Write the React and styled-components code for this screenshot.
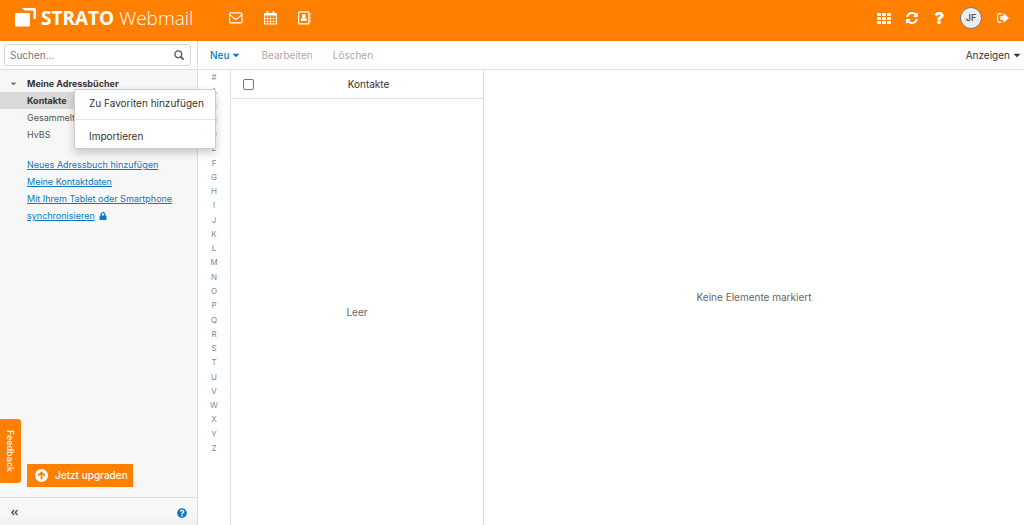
import React from "react";
import styled, { createGlobalStyle } from "styled-components";
import {
  FaCaretDown,
  FaQuestion,
  FaLock,
  FaQuestionCircle,
  FaAngleDoubleLeft,
} from "react-icons/fa";

const orange = "#ff8000";
const blue = "#0a7ac2";
const line = "#dedede";

const GlobalStyle = createGlobalStyle`
  *, *::before, *::after { box-sizing: border-box; }
  body {
    margin: 0;
    background: #fff;
    color: #333;
    font: 400 10px/17px Inter, "Liberation Sans", sans-serif;
  }
  button, input { font: inherit; color: inherit; }
  ul { list-style: none; margin: 0; padding: 0; }
  svg { display: block; flex: none; }
`;

const Page = styled.div`
  display: flex;
  flex-direction: column;
  min-height: 100vh;
`;

const Header = styled.header`
  display: flex;
  align-items: center;
  height: 41px;
  padding: 0 15px 5px 15px;
  background: ${orange};
  color: #fff;
`;

const Brand = styled.a`
  display: flex;
  align-items: center;
  gap: 5px;
  width: 214px;
  color: #fff;
  text-decoration: none;
  font: 300 19px/24px "Open Sans", "Noto Sans", sans-serif;
  white-space: nowrap;

  b { font-weight: 700; }
`;

const Apps = styled.nav`
  display: flex;
  align-items: center;
  gap: 21px;
  flex: 1;
`;

const Tools = styled.div`
  display: flex;
  align-items: center;
  gap: 15px;
`;

const IconButton = styled.button`
  display: flex;
  align-items: center;
  justify-content: center;
  min-width: 12px;
  padding: 0;
  border: 0;
  background: none;
  color: ${(p) => p.$color || "inherit"};
  cursor: pointer;
`;

const Avatar = styled.button`
  width: 22px;
  height: 22px;
  padding: 0;
  border: 1px solid #777;
  border-radius: 50%;
  background: #eee;
  color: #555;
  font-size: 9px;
  font-weight: 600;
  line-height: 20px;
`;

const Bar = styled.div`
  display: flex;
  height: 29px;
  border-bottom: 1px solid ${line};
`;

const SearchCell = styled.div`
  width: 198px;
  padding: 3px 6px 3px 4px;
  border-right: 1px solid ${line};
`;

const SearchBox = styled.form`
  display: flex;
  align-items: center;
  height: 22px;
  padding: 0 5px;
  border: 1px solid #d4d4d4;
  border-radius: 3px;
  color: #555;
`;

const SearchInput = styled.input`
  flex: 1;
  min-width: 0;
  padding: 0;
  border: 0;
  outline: 0;
  background: none;

  &::placeholder { color: #777; opacity: 1; }
`;

const Actions = styled.div`
  display: flex;
  flex: 1;
  align-items: center;
  gap: 20px;
  padding: 0 2px 0 12px;
`;

const Action = styled.button`
  display: flex;
  align-items: center;
  gap: 2px;
  padding: 0;
  border: 0;
  background: none;
  color: ${(p) => p.$color || "#333"};
  font-weight: ${(p) => (p.$strong ? 500 : 400)};
  margin-left: ${(p) => (p.$end ? "auto" : 0)};

  &:disabled { color: #aaa; }
`;

const Body = styled.div`
  display: flex;
  flex: 1;
`;

const Sidebar = styled.aside`
  position: relative;
  display: flex;
  flex-direction: column;
  width: 198px;
  border-right: 1px solid ${line};
  background: #f7f7f7;
  font-size: 9px;
`;

const Folders = styled.ul`
  padding-top: 5px;
`;

const FolderButton = styled.button`
  display: flex;
  align-items: center;
  width: 100%;
  height: 17px;
  padding: 0 0 0 9px;
  border: 0;
  background: ${(p) => (p.$selected ? "#d9d9d9" : "none")};
  color: ${(p) => (p.$strong ? "#333" : "#555")};
  font-weight: ${(p) => (p.$strong ? 700 : 400)};
`;

const Caret = styled.span`
  width: 18px;
  color: #777;
`;

const Links = styled.ul`
  flex: 1;
  padding: 13px 16px 0 27px;

  a { color: ${blue}; text-decoration: underline; }
  svg { display: inline-block; margin-left: 2px; color: ${blue}; vertical-align: -1px; }
`;

const Upgrade = styled.button`
  display: flex;
  align-items: center;
  align-self: flex-start;
  gap: 7px;
  height: 23px;
  margin: 0 0 10px 27px;
  padding: 0 5px 0 8px;
  border: 0;
  background: ${orange};
  color: #fff;
  font-size: 10px;
  font-weight: 500;
`;

const SidebarFooter = styled.footer`
  display: flex;
  align-items: center;
  justify-content: space-between;
  height: 28px;
  padding: 2px 9px 0 8px;
  border-top: 1px solid ${line};
  background: linear-gradient(#f7f7f7 50%, #f0f0f0);
`;

const Feedback = styled.button`
  position: absolute;
  left: 0;
  bottom: 42px;
  width: 21px;
  height: 64px;
  padding: 0;
  border: 0;
  border-radius: 0 3px 3px 0;
  background: ${orange};
  color: #fff;
  font-size: 9px;
  font-weight: 500;
  line-height: 21px;
  writing-mode: vertical-rl;
`;

const Menu = styled.ul`
  position: absolute;
  z-index: 2;
  top: 19px;
  left: 74px;
  width: 142px;
  border: 1px solid #ccc;
  border-radius: 2px;
  background: #fff;
  box-shadow: 0 4px 8px rgba(0, 0, 0, 0.2);
  font-size: 10px;
  line-height: 16px;

  li + li { border-top: 1px solid #e5e5e5; }
`;

const MenuButton = styled.button`
  display: block;
  width: 100%;
  padding: ${(p) => (p.$last ? "8px 0 4px 14px" : "5px 0 8px 14px")};
  border: 0;
  background: none;
  text-align: left;
  white-space: nowrap;
`;

const Letters = styled.ul`
  display: flex;
  flex-direction: column;
  justify-content: space-between;
  width: 32px;
  height: 385px;
  text-align: center;
  font-size: 8px;
  line-height: 14px;

  a { color: #888; text-decoration: none; }
`;

const List = styled.section`
  display: flex;
  flex-direction: column;
  width: 254px;
  border: solid ${line};
  border-width: 0 1px;
`;

const ListHeader = styled.header`
  display: flex;
  align-items: center;
  height: 29px;
  padding-left: 12px;
  border-bottom: 1px solid ${line};
`;

const CheckBox = styled.input`
  appearance: none;
  width: 11px;
  height: 11px;
  margin: 0;
  border: 1px solid #767676;
  border-radius: 2px;
  background: #fff;
`;

const ListTitle = styled.h1`
  flex: 1;
  margin: 0;
  font-size: 10px;
  font-weight: 400;
  text-align: center;
`;

const Empty = styled.p`
  display: flex;
  flex: 1;
  align-items: center;
  justify-content: center;
  margin: 0;
  color: #666;
`;

const Logo = () => (
  <svg width="21" height="21" viewBox="0 0 21 21" fill="#fff" aria-hidden="true">
    <rect x="0" y="5" width="15" height="13.500" rx="1" />
    <path d="M7 0h12.500a1.500 1.500 0 0 1 1.500 1.500V11h-2.500V3.500a1 1 0 0 0-1-1H9.500z" />
  </svg>
);

const MailIcon = () => (
  <svg width="14" height="12" viewBox="0 0 14 12" fill="none" stroke="#fff" strokeWidth="1.100" aria-hidden="true">
    <rect x=".6" y=".9" width="12.400" height="10" rx="1" />
    <path d="M.8 2.600C2 4 4 5.300 5.300 6.500q1.500 1.300 3 0C9.800 5.300 11.700 4 12.800 2.600" />
  </svg>
);

const CalendarIcon = () => (
  <svg width="13" height="14" viewBox="0 0 13 14" fill="none" stroke="#fff" aria-hidden="true">
    <path d="M.5 2.500h12v10.500H.5z" strokeLinejoin="round" />
    <path d="M.5 2.500h12v1.500H.5z" fill="#fff" />
    <path d="M3.500 5v8M6.500 5v8M9.500 5v8M1 7.500h11M1 10.300h11" strokeWidth=".6" />
    <path d="M3.500 1v2.500M9.500 1v2.500" strokeWidth="1.900" strokeLinecap="round" />
  </svg>
);

const BookIcon = () => (
  <svg width="13" height="14" viewBox="0 0 13 14" aria-hidden="true">
    <rect x=".6" y=".9" width="10.300" height="12" rx="1" fill="none" stroke="#fff" strokeWidth="1.200" />
    <g fill="#fff">
      <circle cx="5.800" cy="5" r="2" />
      <path d="M2.900 10V8.700q0-1.700 1.500-1.900 1.400 1 2.800 0 1.500.2 1.500 1.900V10z" />
      <path d="M11.400 2.200h1.100v2h-1.100zM11.400 5.700h1.100v2h-1.100zM11.400 9.200h1.100v2h-1.100z" />
    </g>
  </svg>
);

const GridIcon = () => (
  <svg width="14" height="11" viewBox="0 0 14 11" fill="#fff" aria-hidden="true">
    {[0, 4, 8].map((y) =>
      [0, 5, 10].map((x) => <rect key={`${x}-${y}`} x={x} y={y} width="4" height="3" rx=".5" />)
    )}
  </svg>
);

const RefreshIcon = () => (
  <svg width="12" height="12" viewBox="0 0 1536 1536" fill="#fff" aria-hidden="true">
    <path d="M1511 928q0 5-1 7-64 268-268 434.500T764 1536q-146 0-282.500-55T238 1324l-129 129q-19 19-45 19t-45-19-19-45V960q0-26 19-45t45-19h448q26 0 45 19t19 45-19 45l-137 137q71 66 161 102t187 36q134 0 250-65t186-179q11-17 53-117 8-23 30-23h192q13 0 22.500 9.500t9.500 22.500zm25-800v448q0 26-19 45t-45 19h-448q-26 0-45-19t-19-45 19-45l138-138Q969 256 768 256q-134 0-250 65T332 500q-11 17-53 117-8 23-30 23H50q-13 0-22.500-9.500T18 608v-7q65-268 270-434.500T768 0q146 0 284 55.500T1297 212l130-129q19-19 45-19t45 19 19 45z" />
  </svg>
);

const SignOutIcon = () => (
  <svg width="12" height="10" viewBox="0 0 12 10" aria-hidden="true">
    <path d="M4.500.6H2.300Q.6.600.6 2.300v5.400q0 1.700 1.700 1.700h2.200" fill="none" stroke="#fff" strokeWidth="1.200" />
    <path d="M6.800.7 11.500 5 6.800 9.300V6.800H3.600V3.200h3.200z" fill="#fff" stroke="#fff" strokeWidth=".6" strokeLinejoin="round" />
  </svg>
);

const SearchIcon = () => (
  <svg width="10" height="10" viewBox="0 0 10 10" fill="none" stroke="#555" aria-hidden="true">
    <circle cx="4.300" cy="4.300" r="3.400" strokeWidth="1.300" />
    <path d="M6.900 6.900 9.100 9.100" strokeWidth="1.700" strokeLinecap="round" />
  </svg>
);

const UpIcon = () => (
  <svg width="13" height="13" viewBox="0 0 13 13" aria-hidden="true">
    <circle cx="6.500" cy="6.500" r="6.500" fill="#fff" />
    <path d="M6.500 10.500V4M3.200 6.700l3.300-3.300 3.300 3.300" fill="none" stroke={orange} strokeWidth="1.800" />
  </svg>
);

const letters = ["#", ..."ABCDEFGHIJKLMNOPQRSTUVWXYZ"];

export default function App() {
  return (
    <Page>
      <GlobalStyle />
      <Header>
        <Brand href="#">
          <Logo />
          <span><b>STRATO</b> Webmail</span>
        </Brand>
        <Apps aria-label="Apps">
          <IconButton aria-label="E-Mail"><MailIcon /></IconButton>
          <IconButton aria-label="Kalender"><CalendarIcon /></IconButton>
          <IconButton aria-label="Adressbuch"><BookIcon /></IconButton>
        </Apps>
        <Tools>
          <IconButton aria-label="Alle Apps"><GridIcon /></IconButton>
          <IconButton aria-label="Aktualisieren"><RefreshIcon /></IconButton>
          <IconButton aria-label="Hilfe"><FaQuestion size={12} stroke="#fff" strokeWidth={30} /></IconButton>
          <Avatar>JF</Avatar>
          <IconButton aria-label="Abmelden"><SignOutIcon /></IconButton>
        </Tools>
      </Header>

      <Bar>
        <SearchCell>
          <SearchBox role="search">
            <SearchInput type="text" aria-label="Suchen" placeholder="Suchen..." />
            <IconButton type="button" aria-label="Suche starten"><SearchIcon /></IconButton>
          </SearchBox>
        </SearchCell>
        <Actions>
          <Action $color={blue} $strong>Neu <FaCaretDown size={10} /></Action>
          <Action disabled>Bearbeiten</Action>
          <Action disabled>Löschen</Action>
          <Action $end>Anzeigen <FaCaretDown size={10} /></Action>
        </Actions>
      </Bar>

      <Body>
        <Sidebar>
          <Folders>
            <li><FolderButton $strong><Caret><FaCaretDown size={9} /></Caret>Meine Adressbücher</FolderButton></li>
            <li><FolderButton $strong $selected><Caret />Kontakte</FolderButton></li>
            <li><FolderButton><Caret />Gesammelt</FolderButton></li>
            <li><FolderButton><Caret />HvBS</FolderButton></li>
          </Folders>
          <Links>
            <li><a href="#">Neues Adressbuch hinzufügen</a></li>
            <li><a href="#">Meine Kontaktdaten</a></li>
            <li><a href="#">Mit Ihrem Tablet oder Smartphone synchronisieren</a> <FaLock size={8} /></li>
          </Links>
          <Upgrade><UpIcon />Jetzt upgraden</Upgrade>
          <SidebarFooter>
            <IconButton aria-label="Ordneransicht schließen" $color="#555"><FaAngleDoubleLeft size={9} /></IconButton>
            <IconButton aria-label="Hilfe" $color={blue}><FaQuestionCircle size={10} /></IconButton>
          </SidebarFooter>
          <Feedback>Feedback</Feedback>
          <Menu>
            <li><MenuButton>Zu Favoriten hinzufügen</MenuButton></li>
            <li><MenuButton $last>Importieren</MenuButton></li>
          </Menu>
        </Sidebar>
        <Letters>
          {letters.map((l) => <li key={l}><a href="#">{l}</a></li>)}
        </Letters>
        <List>
          <ListHeader>
            <CheckBox type="checkbox" aria-label="Alle auswählen" />
            <ListTitle>Kontakte</ListTitle>
          </ListHeader>
          <Empty>Leer</Empty>
        </List>
        <Empty as="main">Keine Elemente markiert</Empty>
      </Body>
    </Page>
  );
}
